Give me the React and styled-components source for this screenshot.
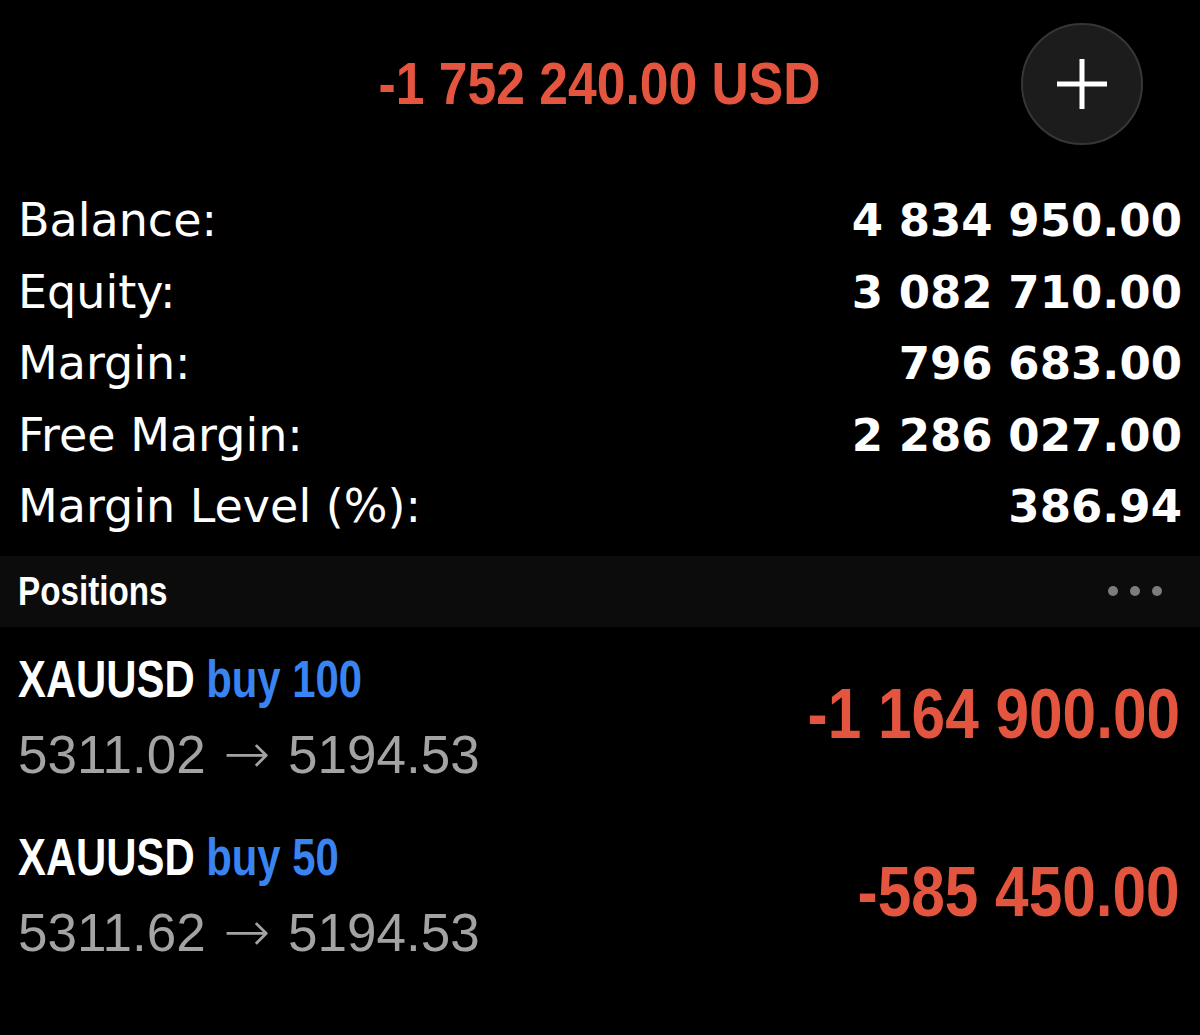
import styled, { createGlobalStyle } from "styled-components";

// No condensed face is installed, so the compact headings are Liberation Sans Bold squeezed horizontally.
const compact = `
    font-family: "Liberation Sans", Arial, sans-serif;
    font-weight: 700;
    display: inline-block;
    white-space: nowrap;
`;

const summary = [
    { label: "Balance:", value: "4 834 950.00" },
    { label: "Equity:", value: "3 082 710.00" },
    { label: "Margin:", value: "796 683.00" },
    { label: "Free Margin:", value: "2 286 027.00" },
    { label: "Margin Level (%):", value: "386.94" },
];

const positions = [
    { symbol: "XAUUSD", side: "buy 100", open: "5311.02", current: "5194.53", profit: "-1 164 900.00" },
    { symbol: "XAUUSD", side: "buy 50", open: "5311.62", current: "5194.53", profit: "-585 450.00" },
];

export default function App() {
    return (
        <>
            <GlobalStyle />
            <Screen>
                <Header>
                    <span />
                    <Total>-1 752 240.00 USD</Total>
                    <AddButton aria-label="New order">
                        <svg width="52" height="52" viewBox="0 0 52 52">
                            <path d="M26 1v50M1 26h50" stroke="#fff" strokeWidth="5" />
                        </svg>
                    </AddButton>
                </Header>

                <Summary>
                    {summary.map((row) => (
                        <SummaryRow key={row.label}>
                            <Label>{row.label}</Label>
                            <Value>{row.value}</Value>
                        </SummaryRow>
                    ))}
                </Summary>

                <SectionBar>
                    <SectionTitle>Positions</SectionTitle>
                    <Dots>
                        <Dot />
                        <Dot />
                        <Dot />
                    </Dots>
                </SectionBar>

                {positions.map((p) => (
                    <PositionRow key={p.side}>
                        <PositionInfo>
                            <div>
                                <Symbol>
                                    {p.symbol} <Side>{p.side}</Side>
                                </Symbol>
                            </div>
                            <Prices>
                                {p.open} <Arrow>→</Arrow> {p.current}
                            </Prices>
                        </PositionInfo>
                        <Profit>{p.profit}</Profit>
                    </PositionRow>
                ))}
            </Screen>
        </>
    );
}

const GlobalStyle = createGlobalStyle`
    html, body {
        margin: 0;
        padding: 0;
        background: #000;
    }
`;

const Screen = styled.div`
    width: 1200px;
    height: 1035px;
    background: #000;
    color: #fff;
    overflow: hidden;
`;

const Header = styled.div`
    display: grid;
    grid-template-columns: 1fr auto 1fr;
    align-items: center;
    padding: 23px 57px 0;
    height: 122px;
`;

const Total = styled.div`
    ${compact}
    font-size: 59px;
    line-height: 1;
    color: #e4553f;
    transform: scaleX(0.875);
    transform-origin: center;
`;

const AddButton = styled.button`
    justify-self: end;
    width: 122px;
    height: 122px;
    border-radius: 50%;
    border: 2px solid #363636;
    background: #1c1c1c;
    display: flex;
    align-items: center;
    justify-content: center;
    padding: 0;
`;

const Summary = styled.div`
    margin-top: 40px;
    padding: 0 18px;
`;

const SummaryRow = styled.div`
    display: flex;
    justify-content: space-between;
    align-items: baseline;
    height: 71.5px;
    line-height: 71.5px;
`;

const Label = styled.span`
    font-family: "DejaVu Sans", sans-serif;
    font-size: 46px;
    color: #fff;
`;

const Value = styled.span`
    font-family: "DejaVu Sans", sans-serif;
    font-weight: 700;
    font-size: 45px;
    color: #fff;
`;

const SectionBar = styled.div`
    margin-top: 13px;
    height: 71px;
    background: #0c0c0c;
    display: flex;
    align-items: center;
    justify-content: space-between;
    padding: 0 38px 0 18px;
`;

const SectionTitle = styled.span`
    ${compact}
    font-size: 41px;
    color: #fff;
    transform: scaleX(0.81);
    transform-origin: left;
`;

const Dots = styled.div`
    display: flex;
    gap: 12px;
`;

const Dot = styled.span`
    width: 10px;
    height: 10px;
    border-radius: 50%;
    background: #7c7c7c;
`;

const PositionRow = styled.div`
    display: flex;
    justify-content: space-between;
    align-items: center;
    padding: 21px 20px 8px 18px;
`;

const PositionInfo = styled.div`
    display: flex;
    flex-direction: column;
`;

const Symbol = styled.span`
    ${compact}
    font-size: 51px;
    line-height: 64px;
    color: #fff;
    transform: scaleX(0.82);
    transform-origin: left;
`;

const Side = styled.span`
    color: #3a84f2;
`;

const Prices = styled.div`
    font-family: "Liberation Sans", sans-serif;
    font-size: 53px;
    line-height: 84px;
    color: #a3a3a3;
    white-space: nowrap;
`;

const Arrow = styled.span`
    font-family: "DejaVu Sans ExtraLight", "DejaVu Sans", sans-serif;
    font-weight: 200;
    font-size: 56px;
    margin: 0 3px;
`;

const Profit = styled.div`
    ${compact}
    font-size: 70px;
    line-height: 70px;
    color: #e4553f;
    padding-bottom: 16px;
    transform: scaleX(0.862);
    transform-origin: right;
`;
